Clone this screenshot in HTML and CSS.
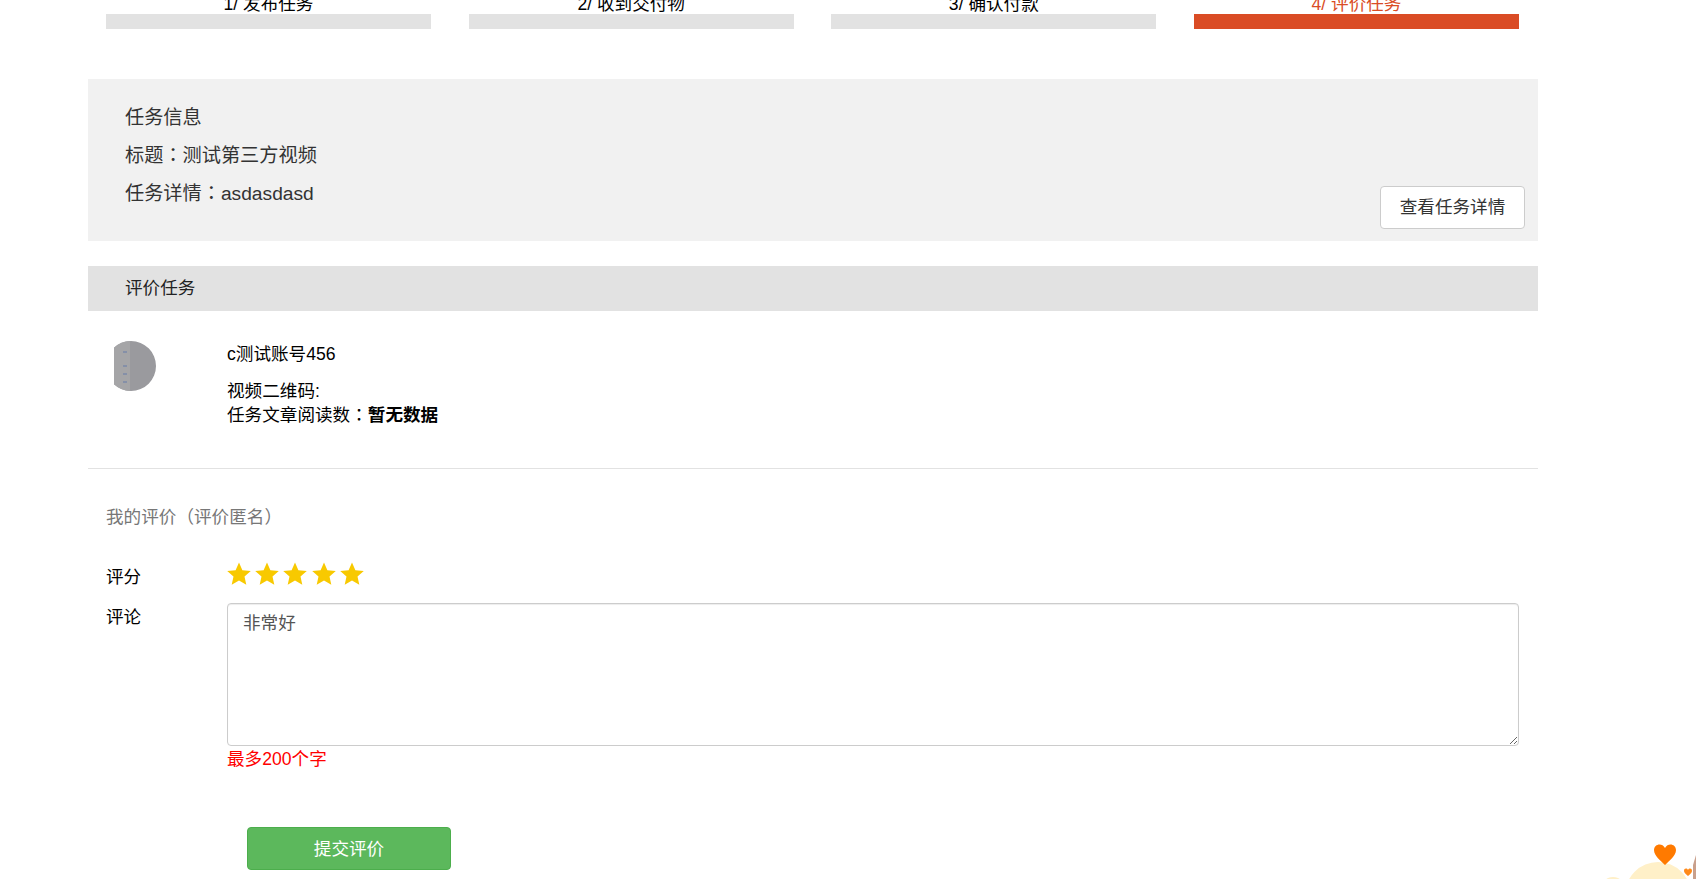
FILE: index.html
```html
<!DOCTYPE html>
<html lang="zh-CN">
<head>
    <meta charset="UTF-8">
    <title>评价任务</title>
    <link rel="stylesheet" href="styles.css">
</head>
<body>
    <div class="page">
        <div class="steps">
            <div class="step"><span class="step-name">1/ 发布任务</span><div class="step-bar"></div></div>
            <div class="step"><span class="step-name">2/ 收到交付物</span><div class="step-bar"></div></div>
            <div class="step"><span class="step-name">3/ 确认付款</span><div class="step-bar"></div></div>
            <div class="step active"><span class="step-name">4/ 评价任务</span><div class="step-bar"></div></div>
        </div>

        <div class="task-info">
            <div class="task-lines">
                <p>任务信息</p>
                <p>标题<span class="punct" lang="zh-TW">：</span>测试第三方视频</p>
                <p>任务详情<span class="punct" lang="zh-TW">：</span>asdasdasd</p>
            </div>
            <button type="button" class="btn btn-default">查看任务详情</button>
        </div>

        <div class="section-head">评价任务</div>

        <div class="reviewee">
            <svg class="avatar" width="42" height="50" viewBox="0 0 42 50">
                <path d="M17 0a25 25 0 0 1 0 50a25 25 0 0 1 -17 -6.7v-36.6a25 25 0 0 1 17 -6.7z" fill="#9a9a9e"/>
                <path d="M0 6.700a25 25 0 0 1 16 -6.700v50a25 25 0 0 1 -16 -6.700z" fill="#a5a5a7"/>
                <g fill="#8590a8">
                    <rect x="9" y="10" width="4" height="2"/>
                    <rect x="9" y="24" width="4" height="2"/>
                    <rect x="9" y="32" width="4" height="2"/>
                    <rect x="9" y="40" width="4" height="2"/>
                </g>
            </svg>
            <div class="reviewee-text">
                <p class="reviewee-name">c测试账号456</p>
                <p>视频二维码:</p>
                <p>任务文章阅读数<span class="punct" lang="zh-TW">：</span><b>暂无数据</b></p>
            </div>
        </div>

        <div class="my-review">
            <p class="my-review-title">我的评价<span class="punct" lang="zh-TW">（</span>评价匿名<span class="punct" lang="zh-TW">）</span></p>
            <div class="form-row rating-row">
                <label>评分</label>
                <div class="stars">
                    <svg width="24" height="24" viewBox="0 0 24 24"><path d="M12 .5l3.400 7.700 8.400.8-6.300 5.600 1.800 8.200-7.300-4.300-7.300 4.300 1.800-8.200L.2 9l8.400-.8z"/></svg>
                    <svg width="24" height="24" viewBox="0 0 24 24"><path d="M12 .5l3.400 7.700 8.400.8-6.300 5.600 1.800 8.200-7.300-4.300-7.300 4.300 1.800-8.200L.2 9l8.400-.8z"/></svg>
                    <svg width="24" height="24" viewBox="0 0 24 24"><path d="M12 .5l3.400 7.700 8.400.8-6.300 5.600 1.800 8.200-7.300-4.300-7.300 4.300 1.800-8.200L.2 9l8.400-.8z"/></svg>
                    <svg width="24" height="24" viewBox="0 0 24 24"><path d="M12 .5l3.400 7.700 8.400.8-6.300 5.600 1.800 8.200-7.300-4.300-7.300 4.300 1.800-8.200L.2 9l8.400-.8z"/></svg>
                    <svg width="24" height="24" viewBox="0 0 24 24"><path d="M12 .5l3.400 7.700 8.400.8-6.300 5.600 1.800 8.200-7.300-4.300-7.300 4.300 1.800-8.200L.2 9l8.400-.8z"/></svg>
                </div>
            </div>
            <div class="form-row">
                <label>评论</label>
                <div class="comment-box">
                    <textarea class="comment" readonly>非常好</textarea>
                    <p class="hint">最多200个字</p>
                </div>
            </div>
            <button type="button" class="btn btn-submit">提交评价</button>
        </div>
    </div>

    <!-- floating mascot, cut off by the window corner -->
    <svg class="mascot" width="100" height="50" viewBox="0 0 100 50">
        <ellipse cx="62" cy="66" rx="33" ry="33" fill="#fff0c8"/>
        <ellipse cx="17" cy="51" rx="7" ry="3" fill="#fff0c8"/>
        <path d="M69 36c-4-4-11-9-11-15 0-6 8-8 11-2 3-6 11-4 11 2 0 6-7 11-11 15z" fill="#ff7a00"/>
        <path d="M92 47c-2-2-4-3-4-5 0-3 3-3 4-1 1-2 4-2 4 1 0 2-2 3-4 5z" fill="#ff8a1a"/>
        <path d="M100 26l-3 10v14h3z" fill="#c9a08c"/>
    </svg>
</body>
</html>
```

FILE: styles.css
```css
body {
    margin: 0;
    background-color: #ffffff;
    color: #000;
    font-family: "Liberation Sans", "Noto Sans CJK SC", sans-serif;
    font-size: 17.6px;
    line-height: 24px;
    height: 879px;
    overflow: hidden;
}
p {
    margin: 0;
}
/* centred full width punctuation */
.punct {
    font-family: "Noto Sans CJK TC", sans-serif;
    line-height: 0;
}
.page {
    width: 1450px;
    margin-left: 88px;
    margin-top: -8px;
}
.steps {
    display: flex;
    justify-content: space-between;
    padding: 0 19px 0 18px;
}
.step {
    width: 325px;
    text-align: center;
}
.step-name {
    display: block;
    height: 22px;
    line-height: 24px;
}
.step-bar {
    height: 15px;
    background-color: #e2e2e2;
}
.step.active .step-name {
    color: #da4c25;
}
.step.active .step-bar {
    background-color: #da4c25;
}
.task-info {
    display: flex;
    justify-content: space-between;
    align-items: flex-end;
    margin-top: 50px;
    padding: 20px 13px 12px 37px;
    background-color: #f1f1f1;
    color: #333;
    font-size: 19.2px;
}
.task-lines {
    padding-bottom: 16px;
    line-height: 38px;
}
.btn {
    font-family: inherit;
    font-size: 17.6px;
    border-radius: 4px;
    cursor: pointer;
}
.btn-default {
    width: 145px;
    height: 43px;
    padding: 0 0 5px;
    background-color: #fff;
    border: 1px solid #ccc;
    color: #333;
}
.section-head {
    margin-top: 25px;
    height: 45px;
    padding-left: 37px;
    line-height: 45px;
    background-color: #e2e2e2;
    color: #222;
}
.reviewee {
    display: flex;
    padding: 30px 0 41px 26px;
    border-bottom: 1px solid #e2e2e2;
}
.avatar {
    flex: none;
}
.reviewee-text {
    margin-left: 71px;
    padding-top: 1px;
}
.reviewee-name {
    margin-bottom: 13px;
}
.my-review {
    padding: 36px 19px 0 18px;
}
.my-review-title {
    color: #777;
}
.form-row {
    display: flex;
}
.form-row label {
    flex: none;
    width: 121px;
    padding-top: 2px;
}
.rating-row {
    margin-top: 32px;
    height: 42px;
}
.rating-row label {
    padding-top: 4px;
}
.stars {
    display: flex;
    gap: 4.200px;
    padding-top: 1px;
}
.stars svg {
    fill: #f8c900;
}
.comment-box {
    flex: 1;
}
.comment {
    display: block;
    box-sizing: border-box;
    width: 100%;
    height: 143px;
    margin: 0;
    padding: 7px 15px;
    border: 1px solid #ccc;
    border-radius: 4px;
    box-shadow: inset 0 1px 1px rgba(0, 0, 0, 0.075);
    color: #555;
    font-family: inherit;
    font-size: 17.6px;
    line-height: 24px;
    outline: none;
}
.hint {
    margin-top: 1px;
    color: #ff0000;
}
.btn-submit {
    display: block;
    width: 204px;
    height: 43px;
    margin: 56px 0 0 141px;
    padding: 0 0 2px;
    background-color: #5cb85c;
    border: 1px solid #4cae4c;
    color: #fff;
}
.mascot {
    position: fixed;
    right: 0;
    bottom: 0;
}
```
